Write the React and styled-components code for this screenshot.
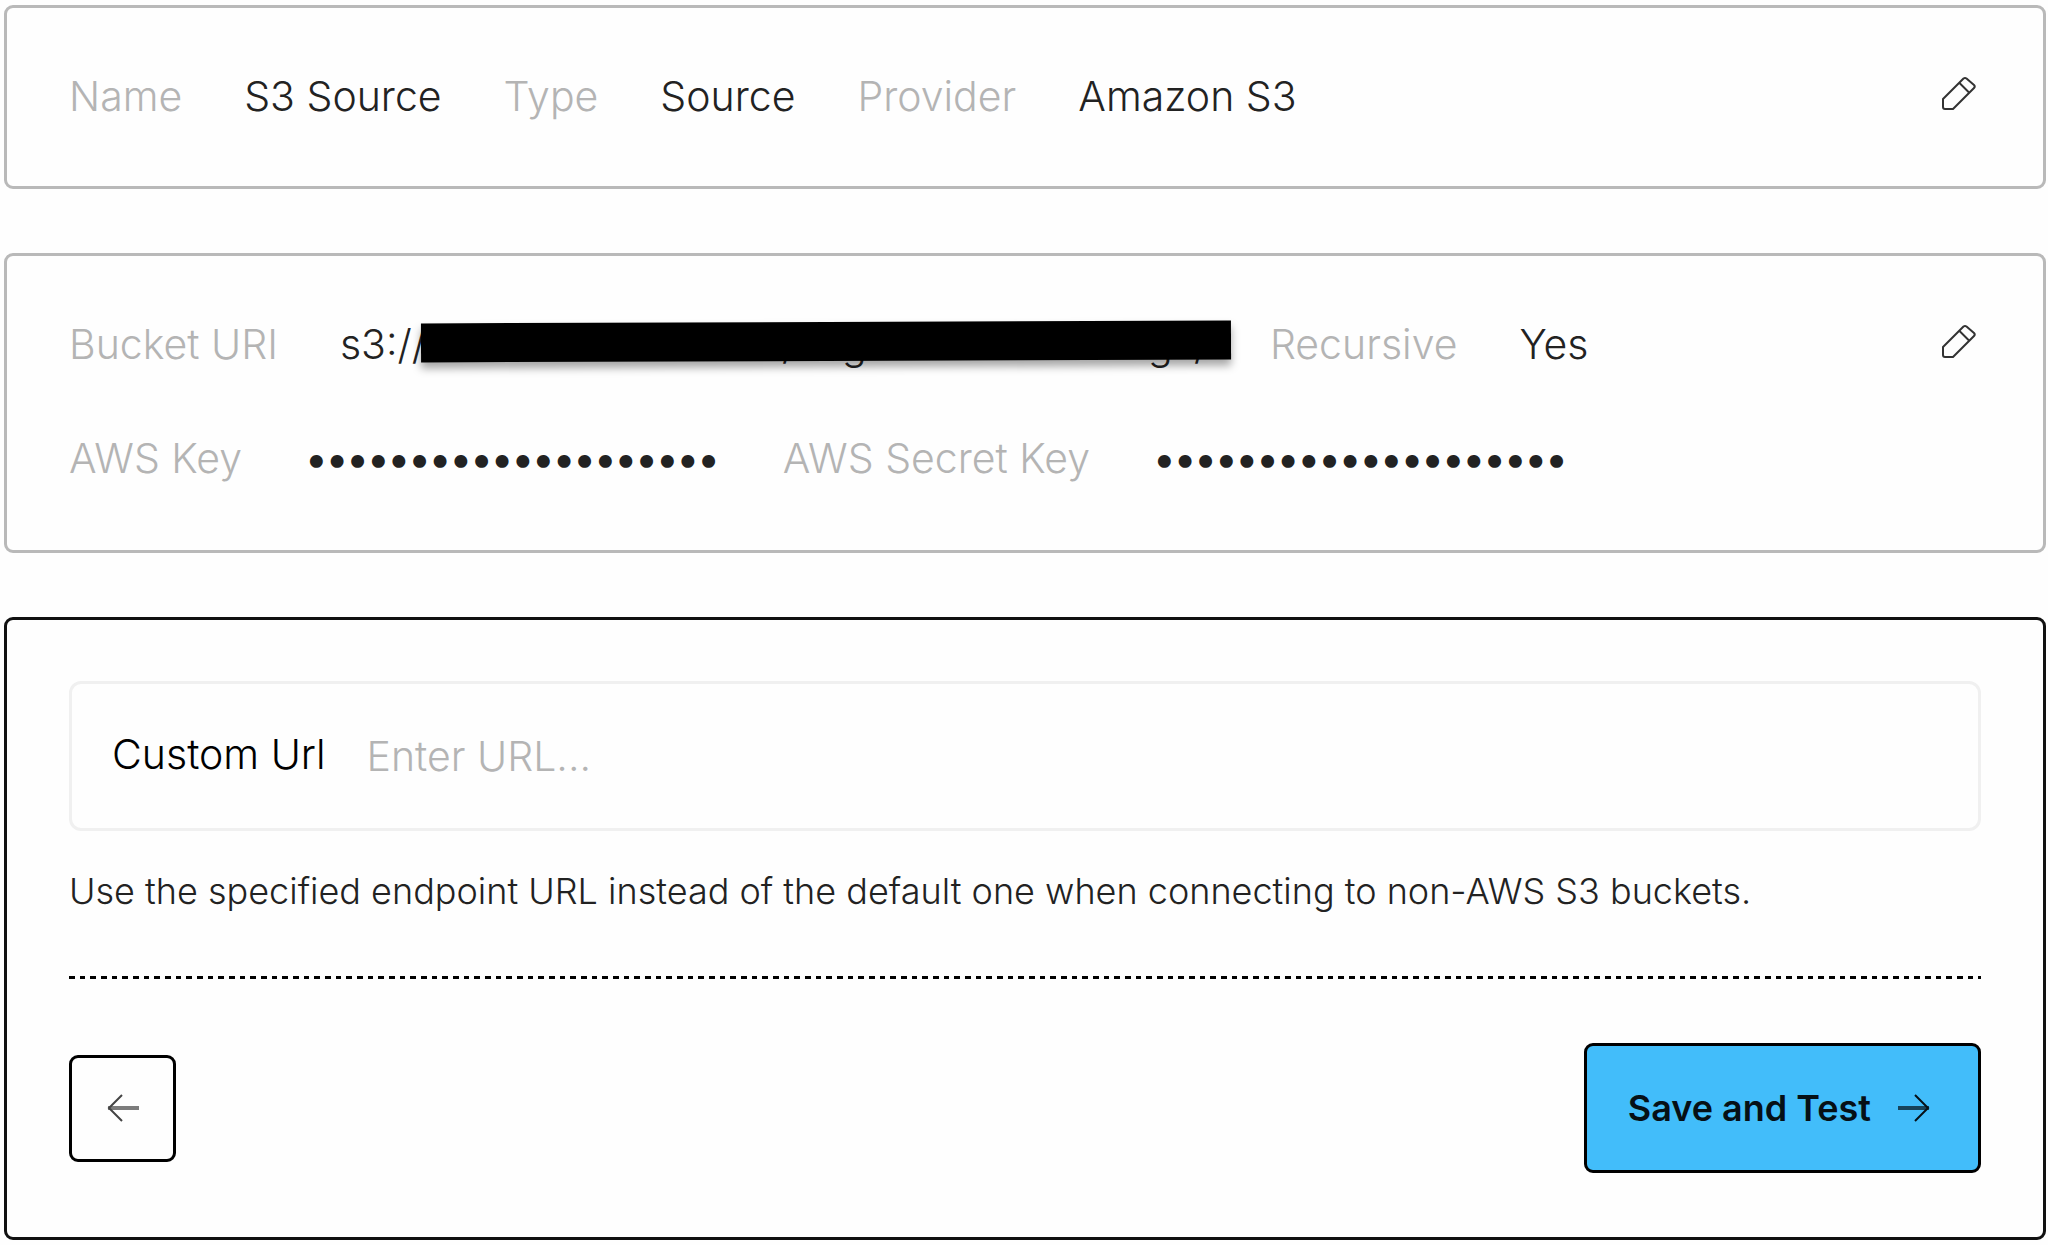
import React, { useState } from "react";
import styled, { createGlobalStyle } from "styled-components";

const App = () => {
    const [url, setUrl] = useState("");

    return (
        <>
            <GlobalStyle />
            <Page>
                <Card>
                    <Rows>
                        <Row>
                            <Label>Name</Label>
                            <Value>S3 Source</Value>
                            <Label>Type</Label>
                            <Value>Source</Value>
                            <Label>Provider</Label>
                            <Value>Amazon S3</Value>
                        </Row>
                    </Rows>
                    <EditButton type="button" aria-label="Edit source">
                        <PencilIcon />
                    </EditButton>
                </Card>

                <Card>
                    <Rows>
                        <Row>
                            <Label>Bucket URI</Label>
                            <UriValue>
                                s3://
                                {/* only the descenders show under the bar */}
                                <Hidden>
                                    <span>/</span>
                                    <span>g</span>
                                    <span>g</span>
                                    <span>/</span>
                                </Hidden>
                                <Redaction />
                            </UriValue>
                            <Label>Recursive</Label>
                            <Value>Yes</Value>
                        </Row>
                        <SecretRow>
                            <Label>AWS Key</Label>
                            <Secret>{"•".repeat(20)}</Secret>
                            <Label>AWS Secret Key</Label>
                            <Secret>{"•".repeat(20)}</Secret>
                        </SecretRow>
                    </Rows>
                    <EditButton type="button" aria-label="Edit bucket">
                        <PencilIcon />
                    </EditButton>
                </Card>

                <FormCard onSubmit={(e) => e.preventDefault()}>
                    <Field>
                        <FieldLabel htmlFor="customUrl">Custom Url</FieldLabel>
                        <FieldInput
                            id="customUrl"
                            type="text"
                            placeholder="Enter URL..."
                            value={url}
                            onChange={(e) => setUrl(e.target.value)}
                        />
                    </Field>
                    <Hint>
                        Use the specified endpoint URL instead of the default one when connecting to non-AWS S3 buckets.
                    </Hint>
                    <Divider />
                    <Actions>
                        <BackButton type="button" aria-label="Back">
                            <ArrowIcon left />
                        </BackButton>
                        <SaveButton type="submit">
                            Save and Test
                            <ArrowIcon />
                        </SaveButton>
                    </Actions>
                </FormCard>
            </Page>
        </>
    );
};

export default App;

const PencilIcon = () => (
    <svg width="36" height="36" viewBox="0 0 36 36" fill="none" stroke="#333" strokeWidth="2" strokeLinejoin="round">
        <path d="M2 23 L22.500 2.500 Q24 1.500 25.500 2.500 L33 9 Q34.500 10.500 33 12 L12 33 H4 Q2 33 2 31 Z" />
        <path d="M18.500 7 L28 16.500" />
    </svg>
);

const ArrowIcon = ({ left }) => (
    <svg width="34" height="30" viewBox="0 0 34 30" fill="none" stroke="currentColor" strokeWidth="2">
        {left ? (
            <>
                <path d="M33 15 H2" strokeWidth="4" opacity="0.7" />
                <path d="M16 2 L3 15 L16 28" />
            </>
        ) : (
            <>
                <path d="M1 15 H32" strokeWidth="4" opacity="0.7" />
                <path d="M18 2 L31 15 L18 28" />
            </>
        )}
    </svg>
);

const GlobalStyle = createGlobalStyle`
    * {
        box-sizing: border-box;
    }
    body {
        margin: 0;
        background: #fefefe;
        font-family: Inter, "Liberation Sans", sans-serif;
    }
    button, input {
        font-family: inherit;
    }
`;

const Page = styled.main`
    display: flex;
    flex-direction: column;
    gap: 64px;
    padding: 5px 2px 5px 4px;
`;

const Card = styled.section`
    display: flex;
    justify-content: space-between;
    align-items: flex-start;
    padding: 61px 66px 63px 62px;
    border: 3px solid #b9b9b9;
    border-radius: 9px;
`;

const Rows = styled.div`
    display: flex;
    flex-direction: column;
    gap: 58px;
`;

const Row = styled.div`
    display: flex;
    gap: 62px;
    font-size: 41px;
    line-height: 54px;
    white-space: nowrap;
`;

const SecretRow = styled(Row)`
    gap: 64px;
    line-height: 58px;
`;

const Label = styled.span`
    color: #b4b4b4;
    font-weight: 300;
`;

const Value = styled.span`
    color: #222;
    font-weight: 300;
`;

const UriValue = styled(Value)`
    position: relative;
    display: flex;
    width: 868px;
`;

const Hidden = styled.span`
    display: grid;
    grid-template-columns: 60px 306px 46px 14px;
    margin-left: auto;
`;

/* marker bar drawn over the bucket name */
const Redaction = styled.span`
    position: absolute;
    left: 81px;
    right: -23px;
    top: 5px;
    height: 39px;
    background: #000;
    transform: rotate(-0.2deg);
    box-shadow: 0 6px 8px rgba(0, 0, 0, 0.35);
`;

const Secret = styled(Value)`
    font-weight: 600;
`;

const EditButton = styled.button`
    display: flex;
    margin-top: 7px;
    padding: 0;
    border: none;
    background: none;
    cursor: pointer;
`;

const FormCard = styled.form`
    padding: 61px 62px 64px;
    border: 3px solid #111;
    border-radius: 9px;
`;

const Field = styled.div`
    display: flex;
    align-items: center;
    gap: 41px;
    height: 150px;
    padding: 0 40px 4px;
    border: 3px solid #f0f0f0;
    border-radius: 12px;
`;

const FieldLabel = styled.label`
    color: #000;
    font-size: 41px;
    font-weight: 300;
    line-height: 54px;
    white-space: nowrap;
`;

const FieldInput = styled.input`
    flex: 1;
    min-width: 0;
    padding: 4px 0 0;
    border: none;
    outline: none;
    background: none;
    color: #222;
    font-size: 41px;
    font-weight: 300;
    line-height: 54px;

    &::placeholder {
        color: #b4b4b4;
        opacity: 1;
    }
`;

const Hint = styled.p`
    margin: 36px 0 61px;
    color: #222;
    font-size: 36px;
    font-weight: 300;
    line-height: 48px;
`;

/* three short dashes in every 32px */
const Divider = styled.div`
    height: 3px;
    background: repeating-linear-gradient(
        90deg,
        #000 0 6px, transparent 6px 11px,
        #000 11px 16px, transparent 16px 21px,
        #000 21px 27px, transparent 27px 32px
    );
`;

const Actions = styled.div`
    display: flex;
    justify-content: space-between;
    align-items: center;
    margin-top: 64px;
`;

const Button = styled.button`
    display: flex;
    align-items: center;
    justify-content: center;
    border: 3px solid #000;
    border-radius: 9px;
    cursor: pointer;
`;

const BackButton = styled(Button)`
    width: 107px;
    height: 107px;
    background: #fefefe;
    color: #444;
`;

const SaveButton = styled(Button)`
    gap: 26px;
    height: 130px;
    padding: 0 47px 0 41px;
    background: #42bdfa;
    color: #061016;
    font-size: 36px;
    font-weight: 600;
`;
